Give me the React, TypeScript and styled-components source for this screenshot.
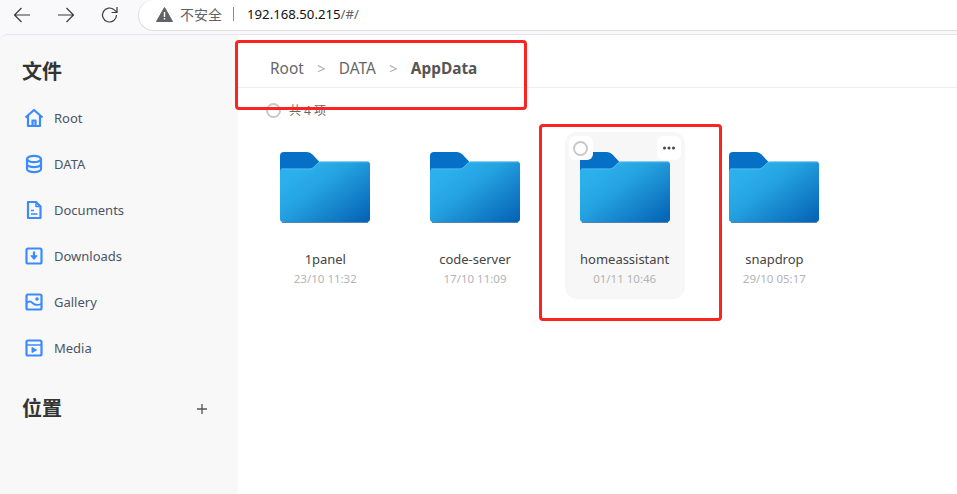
import React from "react";
import styled, { createGlobalStyle } from "styled-components";

const Global = createGlobalStyle`
  html, body { margin: 0; padding: 0; width: 957px; height: 494px; overflow: hidden; background: #fff; }
  * { box-sizing: border-box; }
  body { font-family: "Noto Sans", "Noto Sans CJK SC", sans-serif; }
`;

const Page = styled.div`
  position: relative;
  width: 957px;
  height: 494px;
  display: flex;
  flex-direction: column;
  background: #f9f9fb;
  overflow: hidden;
`;

const BrowserBar = styled.div`
  height: 34px;
  flex: none;
  display: flex;
  align-items: flex-start;
  padding-left: 13px;
  background: #f9f9fb;
`;

const NavButton = styled.div`
  width: 18px;
  height: 18px;
  margin: 6px 26px 0 0;
  color: #3a3a3a;
  display: flex;
`;

const AddressBar = styled.div`
  width: 820px;
  height: 31px;
  margin-left: -7px;
  padding: 0 0 2px 17px;
  display: flex;
  align-items: center;
  background: #fff;
  border: 1px solid #dedfe1;
  border-right: none;
  border-top: none;
  border-radius: 0 0 0 16px;
  border-top-left-radius: 16px;
`;

const Insecure = styled.span`
  font-size: 14px;
  color: #5f6368;
  margin-left: 7px;
`;

const Divider = styled.span`
  width: 1px;
  height: 14px;
  margin: 0 13px 0 11px;
  background: #8a8a8a;
`;

const Url = styled.span`
  font-size: 13.2px;
  color: #111;
`;

const UrlMuted = styled.span`
  color: #5f6368;
`;

const Window = styled.div`
  flex: 1;
  display: flex;
  min-height: 0;
  border-top: 1px solid #e6e6e8;
  border-top-left-radius: 8px;
  overflow: hidden;
`;

const Sidebar = styled.aside`
  width: 238px;
  flex: none;
  padding: 21px 0 0 22px;
  background: #f8f8f9;
`;

const SideTitle = styled.h2`
  margin: 0;
  height: 32px;
  font-size: 20px;
  line-height: 32px;
  font-weight: 700;
  color: #333;
`;

const SideList = styled.div`
  display: flex;
  flex-direction: column;
  margin-top: 7px;
`;

const SideItem = styled.div`
  height: 46px;
  display: flex;
  align-items: center;
  gap: 10px;
  padding-left: 2px;
  font-size: 13px;
  color: #4b5565;
`;

const SideIcon = styled.svg`
  width: 20px;
  height: 20px;
  flex: none;
`;

const PlaceRow = styled.div`
  margin-top: 22px;
  width: 187px;
  display: flex;
  align-items: center;
  justify-content: space-between;
`;

const Plus = styled.svg`
  width: 14px;
  height: 14px;
  color: #555;
`;

const Main = styled.main`
  flex: 1;
  background: #fff;
  display: flex;
  flex-direction: column;
`;

const Crumbs = styled.nav`
  height: 53px;
  flex: none;
  padding: 14px 0 0 32px;
  display: flex;
  align-items: center;
  border-bottom: 1px solid #f0f0f0;
  font-size: 15.4px;
  color: #666;
`;

const Sep = styled.span`
  margin: 0 13.5px;
  font-size: 14px;
  color: #aaa;
`;

const CrumbCurrent = styled.strong`
  font-weight: 700;
  color: #555;
`;

const CountRow = styled.div`
  height: 44px;
  flex: none;
  padding-left: 28px;
  display: flex;
  align-items: center;
  gap: 8px;
  font-size: 12px;
  color: #666;
`;

const Ring = styled.span`
  display: block;
  width: 15px;
  height: 15px;
  border: 2px solid #c8c8c8;
  border-radius: 50%;
`;

const Grid = styled.div`
  display: flex;
  gap: 29.7px;
  padding-left: 27.3px;
`;

const Card = styled.div<{ $active?: boolean }>`
  position: relative;
  width: 120px;
  height: 167px;
  padding-top: 20px;
  display: flex;
  flex-direction: column;
  align-items: center;
  border-radius: 12px;
  background: ${(p) => (p.$active ? "#f7f7f7" : "transparent")};
`;

const Folder = styled.svg`
  width: 90px;
  height: 71px;
  flex: none;
`;

const CardName = styled.div`
  margin-top: 27px;
  font-size: 13px;
  letter-spacing: -0.02px;
  line-height: 18px;
  color: #444;
`;

const CardDate = styled.div`
  margin-top: 3px;
  font-size: 11.5px;
  line-height: 16px;
  color: #b4b4b4;
`;

const Corner = styled.div<{ $side: "left" | "right" }>`
  position: absolute;
  top: 4px;
  ${(p) => p.$side}: 4px;
  width: 24px;
  height: 24px;
  border-radius: 6px;
  background: #fff;
  display: flex;
  align-items: center;
  justify-content: center;
`;

const Dots = styled.svg`
  width: 14px;
  height: 4px;
`;

const RedBox = styled.div<{ $x: number; $y: number; $w: number; $h: number }>`
  position: absolute;
  left: ${(p) => p.$x}px;
  top: ${(p) => p.$y}px;
  width: ${(p) => p.$w}px;
  height: ${(p) => p.$h}px;
  border: 3px solid #fb2420;
  border-radius: 4px;
  pointer-events: none;
`;

const FolderArt = ({ id }: { id: string }) => (
  <Folder viewBox="0 0 90 71">
    <defs>
      <linearGradient id={`${id}-f`} x1="0.12" y1="0.25" x2="0.95" y2="1">
        <stop offset="0" stopColor="#2bb0ec" />
        <stop offset="0.3" stopColor="#25a3e1" />
        <stop offset="1" stopColor="#0563b5" />
      </linearGradient>
    </defs>
    <path d="M0 4a4 4 0 0 1 4-4h23a8 8 0 0 1 5.500 2.500l7 7.500v11H0z" fill="#0670c6" />
    <path d="M0 19.500a3 3 0 0 1 3-3h26c2 0 3.500-.5 5-2l3-3c1.500-1.500 3-2 5-2h45a3 3 0 0 1 3 3v54.500a3 3 0 0 1-3 3H3a3 3 0 0 1-3-3z" fill={`url(#${id}-f)`} />
    <path d="M1 17h28c2 0 3.500-.5 5-2l3-3c1.500-1.500 3-2 5-2h47" stroke="#6fc6f0" strokeOpacity=".55" strokeWidth="1" fill="none" />
    <path d="M2 70.500h86" stroke="#0a4f94" strokeOpacity=".7" strokeWidth="1" />
  </Folder>
);

const blue = "#3b8bff";

const Home = () => (
  <SideIcon viewBox="0 0 20 20" fill="none" stroke={blue} strokeWidth="2.200" strokeLinejoin="round">
    <path d="M1.500 9.500 10 2l8.500 7.500" />
    <path d="M4 8v10h12V8" />
    <path d="M8.500 18v-5.500h3V18" />
  </SideIcon>
);
const Db = () => (
  <SideIcon viewBox="0 0 20 20" fill="none" stroke={blue} strokeWidth="2.200">
    <ellipse cx="10" cy="5" rx="7" ry="3.200" />
    <path d="M3 5v10c0 1.800 3.100 3.200 7 3.200s7-1.400 7-3.200V5" />
    <path d="M3 10c0 1.800 3.100 3.200 7 3.200s7-1.400 7-3.200" />
  </SideIcon>
);
const Doc = () => (
  <SideIcon viewBox="0 0 20 20" fill="none" stroke={blue} strokeWidth="2.200" strokeLinejoin="round">
    <path d="M4 2h8l4.500 4.500V18H4z" />
    <path d="M12 2v4.500h4.500" strokeWidth="1.500" />
    <path d="M7 10.500h3M7 14h6.500" strokeWidth="1.600" />
  </SideIcon>
);
const Down = () => (
  <SideIcon viewBox="0 0 20 20" fill="none" stroke={blue} strokeWidth="2.200" strokeLinejoin="round">
    <rect x="2.500" y="2.500" width="15" height="15" rx="1.500" />
    <path d="M10 5.500v7" />
    <path d="M6.800 9.800 10 13.500l3.200-3.700z" fill={blue} strokeWidth="1" />
  </SideIcon>
);
const Pic = () => (
  <SideIcon viewBox="0 0 20 20" fill="none" stroke={blue} strokeWidth="2.200" strokeLinejoin="round">
    <rect x="2.500" y="2.500" width="15" height="15" rx="1.500" />
    <path d="M3 11c2-2 3.500-2 5.500 0s4 3 8.500 1" strokeWidth="1.800" />
    <circle cx="13" cy="7" r="1.800" fill={blue} stroke="none" />
  </SideIcon>
);
const Film = () => (
  <SideIcon viewBox="0 0 20 20" fill="none" stroke={blue} strokeWidth="2.200" strokeLinejoin="round">
    <rect x="2.500" y="2.500" width="15" height="15" rx="1.500" />
    <path d="M3 7h14" strokeWidth="1.500" />
    <path d="M5 4.800h1.500M8.500 4.800H10M12 4.800h1.500" strokeWidth="1.200" stroke="#fff" />
    <path d="M8 9.500v5l4.500-2.500z" fill={blue} strokeWidth="1" />
  </SideIcon>
);

const sideItems = [
  { label: "Root", Icon: Home },
  { label: "DATA", Icon: Db },
  { label: "Documents", Icon: Doc },
  { label: "Downloads", Icon: Down },
  { label: "Gallery", Icon: Pic },
  { label: "Media", Icon: Film },
];

const files = [
  { name: "1panel", date: "23/10 11:32" },
  { name: "code-server", date: "17/10 11:09" },
  { name: "homeassistant", date: "01/11 10:46", active: true },
  { name: "snapdrop", date: "29/10 05:17" },
];

export default function App() {
  return (
    <Page>
      <Global />
      <BrowserBar>
        <NavButton>
          <svg width="18" height="18" viewBox="0 0 18 18" fill="none" stroke="currentColor" strokeWidth="1.200">
            <path d="M1.500 9h15.500M8.500 2 1.500 9l7 7" />
          </svg>
        </NavButton>
        <NavButton>
          <svg width="18" height="18" viewBox="0 0 18 18" fill="none" stroke="currentColor" strokeWidth="1.200">
            <path d="M1 9h15.500M9.500 2l7 7-7 7" />
          </svg>
        </NavButton>
        <NavButton>
          <svg width="18" height="18" viewBox="0 0 18 18" fill="none" stroke="currentColor" strokeWidth="1.200">
            <path d="M15.500 9a7 7 0 1 1-2.200-5.100L16 6.300" />
            <path d="M16 1v5.500h-5.500" />
          </svg>
        </NavButton>
        <AddressBar>
          <svg width="17" height="15" viewBox="0 0 17 15">
            <path d="M8.500.5 16.500 14.500H.5z" fill="#5f6368" stroke="#5f6368" strokeLinejoin="round" />
            <path d="M8.500 5v5M8.500 11v1.500" stroke="#fff" strokeWidth="1.400" />
          </svg>
          <Insecure>不安全</Insecure>
          <Divider />
          <Url>
            192.168.50.215<UrlMuted>/#/</UrlMuted>
          </Url>
        </AddressBar>
      </BrowserBar>
      <Window>
        <Sidebar>
          <SideTitle>文件</SideTitle>
          <SideList>
            {sideItems.map(({ label, Icon }) => (
              <SideItem key={label}>
                <Icon />
                {label}
              </SideItem>
            ))}
          </SideList>
          <PlaceRow>
            <SideTitle>位置</SideTitle>
            <Plus viewBox="0 0 14 14" fill="none" stroke="currentColor" strokeWidth="1.300">
              <path d="M7 2v10M2 7h10" />
            </Plus>
          </PlaceRow>
        </Sidebar>
        <Main>
          <Crumbs>
            <span>Root</span>
            <Sep>&gt;</Sep>
            <span>DATA</span>
            <Sep>&gt;</Sep>
            <CrumbCurrent>AppData</CrumbCurrent>
          </Crumbs>
          <CountRow>
            <Ring />
            共 4 项
          </CountRow>
          <Grid>
            {files.map((f) => (
              <Card key={f.name} $active={f.active}>
                <FolderArt id={f.name} />
                <CardName>{f.name}</CardName>
                <CardDate>{f.date}</CardDate>
                {f.active && (
                  <>
                    <Corner $side="left">
                      <Ring />
                    </Corner>
                    <Corner $side="right">
                      <Dots viewBox="0 0 14 4" fill="#444">
                        <circle cx="2.500" cy="2" r="1.500" />
                        <circle cx="7" cy="2" r="1.500" />
                        <circle cx="11.500" cy="2" r="1.500" />
                      </Dots>
                    </Corner>
                  </>
                )}
              </Card>
            ))}
          </Grid>
        </Main>
      </Window>
      <RedBox $x={235} $y={40} $w={292} $h={70} />
      <RedBox $x={539} $y={124} $w={183} $h={197} />
    </Page>
  );
}
